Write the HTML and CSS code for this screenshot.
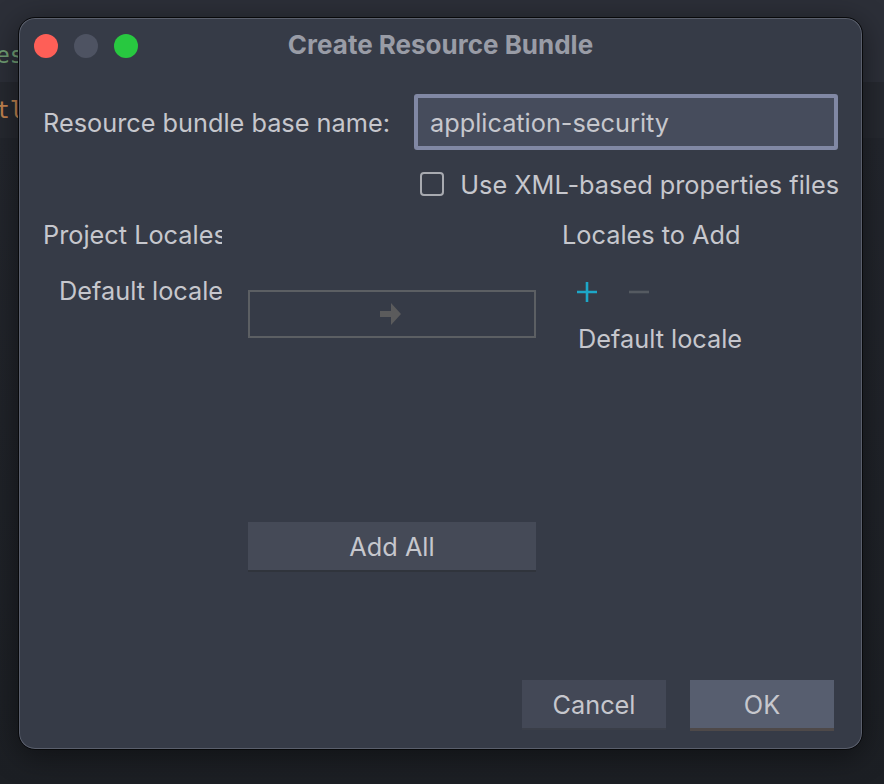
FILE: index.html
```html
<!DOCTYPE html>
<html>
<head>
<meta charset="utf-8">
<link rel="stylesheet" href="styles.css">
</head>
<body>
<div class="editor">
  <div class="line line-top"><span class="code green">es</span></div>
  <div class="line line-current"><span class="code orange">tl</span></div>
  <div class="line-rest"></div>
</div>
<div class="dialog">
  <div class="titlebar">
    <div class="lights">
      <span class="light red"></span>
      <span class="light gray"></span>
      <span class="light green-l"></span>
    </div>
    <div class="title">Create Resource Bundle</div>
  </div>
  <div class="content">
    <div class="name-row">
      <label class="label">Resource bundle base name:</label>
      <div class="input">application-security</div>
    </div>
    <div class="check-row">
      <span class="checkbox"></span>
      <span class="label">Use XML-based properties files</span>
    </div>
    <div class="locales">
      <div class="col-left">
        <div class="heading clip">Project Locales</div>
        <div class="item clip">Default locale</div>
      </div>
      <div class="col-mid">
        <div class="arrow-btn">
          <svg width="22" height="22" viewBox="0 0 22 22"><path d="M0 8h11V0l10 11-10 11v-8H0z" fill="#5b5b5c"/></svg>
        </div>
        <div class="addall-btn">Add All</div>
      </div>
      <div class="col-right">
        <div class="heading">Locales to Add</div>
        <div class="tools">
          <svg width="20" height="20" viewBox="0 0 20 20"><path d="M10 0v20M0 10h20" stroke="#1da7c8" stroke-width="2.6"/></svg>
          <svg width="20" height="20" viewBox="0 0 20 20"><path d="M0 10h20" stroke="#555a61" stroke-width="2.6"/></svg>
        </div>
        <div class="item right-item">Default locale</div>
      </div>
    </div>
    <div class="footer">
      <div class="btn cancel">Cancel</div>
      <div class="btn ok">OK</div>
    </div>
  </div>
</div>
</body>
</html>
```

FILE: styles.css
```css
html, body {
  margin: 0;
  padding: 0;
}
body {
  width: 884px;
  height: 784px;
  position: relative;
  overflow: hidden;
  background: #1d2026;
  font-family: Inter, "Noto Sans", sans-serif;
}
.editor {
  display: flex;
  flex-direction: column;
  height: 784px;
}
.line {
  display: flex;
  align-items: center;
  font-family: "DejaVu Sans Mono", monospace;
  font-size: 23px;
  white-space: nowrap;
}
.code {
  margin-left: -4px;
}
.line-top {
  height: 82px;
  background: #2c2f38;
  padding-top: 28px;
  box-sizing: border-box;
}
.line-current {
  height: 56px;
  background: #262930;
}
.line-rest {
  flex: 1;
  background: linear-gradient(#23262d, #1c1f24);
}
.green { color: #6f9d72; }
.orange { color: #c2834f; }

.dialog {
  position: absolute;
  left: 18px;
  top: 17px;
  width: 845px;
  height: 733px;
  box-sizing: border-box;
  background: #363b47;
  border: 1px solid #08090b;
  border-radius: 17px;
  box-shadow: inset 0 0 0 1px #5a5f6c, 0 6px 30px rgba(0,0,0,0.45);
  display: flex;
  flex-direction: column;
}
.titlebar {
  height: 56px;
  display: flex;
  align-items: center;
  position: relative;
}
.lights {
  display: flex;
  gap: 16px;
  padding-left: 15px;
}
.light {
  width: 24px;
  height: 24px;
  border-radius: 50%;
}
.light.red { background: #fe5f57; }
.light.gray { background: #4e5362; }
.light.green-l { background: #28c840; }
.title {
  position: absolute;
  left: 0;
  right: 0;
  top: 11px;
  text-align: center;
  font-weight: 700;
  font-size: 26px;
  color: #999ca6;
}
.content {
  flex: 1;
  display: flex;
  flex-direction: column;
  padding: 20px 24px 21px 24px;
  color: #c6c7cd;
  font-size: 25.3px;
}
.name-row {
  display: flex;
  align-items: center;
  justify-content: space-between;
}
.input {
  width: 424px;
  height: 56px;
  box-sizing: border-box;
  border: 4px solid #8188a4;
  border-radius: 3px;
  background: #464c5c;
  padding-left: 12px;
  display: flex;
  align-items: center;
  color: #c6c7cd;
}
.check-row {
  display: flex;
  align-items: center;
  justify-content: flex-end;
  gap: 15px;
  margin-top: 20px;
  height: 28px;
  margin-right: -1px;
  white-space: nowrap;
}
.checkbox {
  width: 24px;
  height: 24px;
  box-sizing: border-box;
  border: 2px solid #a8aab0;
  border-radius: 4px;
  margin-right: 1px;
}
.locales {
  display: grid;
  grid-template-columns: 179px 288px 1fr;
  column-gap: 26px;
  margin-top: 20px;
  flex: 1;
}
.heading {
  height: 34px;
  line-height: 34px;
  white-space: nowrap;
}
.clip {
  overflow: hidden;
  white-space: nowrap;
}
.col-left .item {
  padding-left: 16px;
  margin-top: 22px;
  height: 34px;
  line-height: 34px;
}
.col-mid {
  padding-top: 72px;
  display: flex;
  flex-direction: column;
}
.arrow-btn {
  height: 48px;
  box-sizing: border-box;
  border: 2px solid #5c5f63;
  display: flex;
  align-items: center;
  justify-content: center;
}
.arrow-btn svg {
  margin-left: -2px;
}
.addall-btn {
  margin-top: 184px;
  height: 48px;
  background: #454a57;
  box-shadow: 0 2px 0 #30343c;
  display: flex;
  align-items: center;
  justify-content: center;
}
.tools {
  display: flex;
  gap: 32px;
  padding-left: 15px;
  margin-top: 30px;
  height: 20px;
}
.right-item {
  padding-left: 16px;
  margin-top: 20px;
  height: 34px;
  line-height: 34px;
  white-space: nowrap;
}
.footer {
  display: flex;
  justify-content: flex-end;
  gap: 24px;
  padding-right: 4px;
}
.btn {
  width: 144px;
  height: 48px;
  display: flex;
  align-items: center;
  justify-content: center;
}
.cancel {
  background: #434856;
  box-shadow: 0 2px 0 #3a3e48;
}
.ok {
  background: #575e6f;
  box-shadow: 0 3px 0 #4e4949;
}
```
